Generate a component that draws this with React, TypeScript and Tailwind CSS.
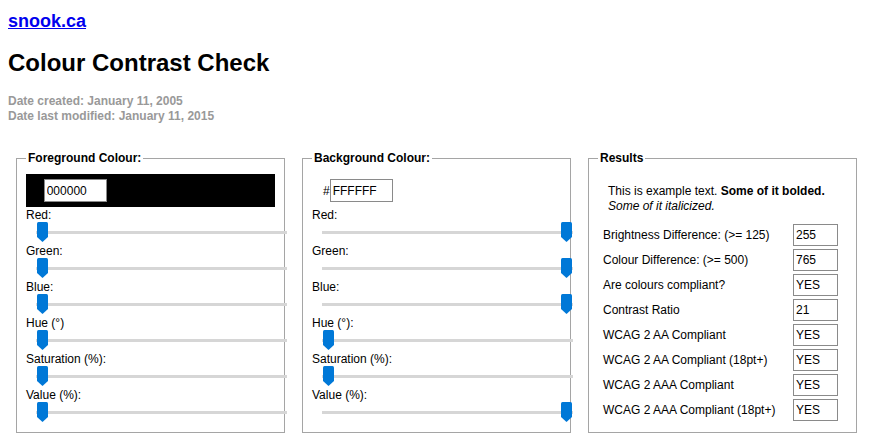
const font = "font-['Liberation_Sans',Arial,sans-serif]";

type SliderRow = { label: string; frac: number };

const fgRows: SliderRow[] = [
  { label: 'Red:', frac: 0 },
  { label: 'Green:', frac: 0 },
  { label: 'Blue:', frac: 0 },
  { label: 'Hue (°)', frac: 0 },
  { label: 'Saturation (%):', frac: 0 },
  { label: 'Value (%):', frac: 0 },
];

const bgRows: SliderRow[] = [
  { label: 'Red:', frac: 1 },
  { label: 'Green:', frac: 1 },
  { label: 'Blue:', frac: 1 },
  { label: 'Hue (°):', frac: 0 },
  { label: 'Saturation (%):', frac: 0 },
  { label: 'Value (%):', frac: 1 },
];

const results: [string, string][] = [
  ['Brightness Difference: (>= 125)', '255'],
  ['Colour Difference: (>= 500)', '765'],
  ['Are colours compliant?', 'YES'],
  ['Contrast Ratio', '21'],
  ['WCAG 2 AA Compliant', 'YES'],
  ['WCAG 2 AA Compliant (18pt+)', 'YES'],
  ['WCAG 2 AAA Compliant', 'YES'],
  ['WCAG 2 AAA Compliant (18pt+)', 'YES'],
];

function Slider({ frac }: { frac: number }) {
  // thumb travels 238px along a 251px track
  return (
    <div className="relative ml-[10px] h-[23px] w-[251px]">
      <div className="absolute left-0 right-0 top-[9px] h-[3px] bg-[#d6d6d6]" />
      <svg
        className="absolute top-0"
        style={{ left: `${1 + frac * 238}px` }}
        width="11"
        height="20"
        viewBox="0 0 11 20"
      >
        <path d="M1.5 0H9.5Q11 0 11 1.5V15L5.5 20L0 15V1.5Q0 0 1.5 0Z" fill="#0078d7" />
      </svg>
    </div>
  );
}

function Fieldset({ title, children }: { title: string; children: React.ReactNode }) {
  return (
    <fieldset className="w-[269px] min-w-0 border border-[#a5a5a5] px-[9px] pt-[8px] pb-[7px]">
      <legend className="px-[2px] text-[12px] font-bold leading-[15px]">{title}</legend>
      {children}
    </fieldset>
  );
}

function ColourPanel({ title, hex, swatch, rows }: { title: string; hex: string; swatch: string; rows: SliderRow[] }) {
  return (
    <Fieldset title={title}>
      <div className={`flex items-center pl-[11px] py-[5px] text-[12px] ${swatch}`}>
        <span>#</span>
        <input
          readOnly
          value={hex}
          className="h-[23px] w-[63px] border border-[#8a8a8a] bg-white px-[2px] text-[12px] text-black outline-none"
        />
      </div>
      <div className="mt-[2px]">
        {rows.map((r) => (
          <div key={r.label}>
            <div className="text-[12px] leading-[13px]">{r.label}</div>
            <Slider frac={r.frac} />
          </div>
        ))}
      </div>
    </Fieldset>
  );
}

export default function App() {
  return (
    <div className={`${font} min-h-screen bg-white px-2 pt-[11px] text-black`}>
      <a href="#" className="block w-fit text-[18px] font-bold leading-[21px] text-[#0000ee] underline">
        snook.ca
      </a>
      <h1 className="mt-[17px] text-[24px] font-bold leading-[28px]">Colour Contrast Check</h1>
      <div className="mt-[17px] text-[12px] font-bold leading-[15px] text-[#999999]">
        <div>Date created: January 11, 2005</div>
        <div>Date last modified: January 11, 2015</div>
      </div>

      <div className="mt-[27px] ml-[8px] flex items-stretch gap-[17px]">
        <ColourPanel title="Foreground Colour:" hex="000000" swatch="bg-black text-black" rows={fgRows} />
        <ColourPanel title="Background Colour:" hex="FFFFFF" swatch="bg-white text-black" rows={bgRows} />

        <Fieldset title="Results">
          <div className="bg-white p-[10px] text-[12px] leading-[15px] text-black">
            This is example text. <strong>Some of it bolded.</strong>
            <br />
            <em>Some of it italicized.</em>
          </div>
          <div className="ml-[5px] grid grid-cols-[190px_45px] gap-y-[3px] text-[12px]">
            {results.map(([label, val]) => (
              <div key={label} className="contents">
                <div className="flex items-center">{label}</div>
                <input
                  readOnly
                  value={val}
                  className="h-[22px] w-[45px] border border-[#8a8a8a] px-[2px] text-[12px] text-black outline-none"
                />
              </div>
            ))}
          </div>
        </Fieldset>
      </div>
    </div>
  );
}
